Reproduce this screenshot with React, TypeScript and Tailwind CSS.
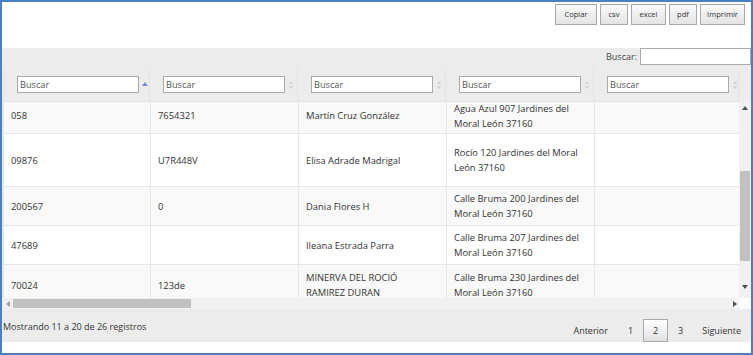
const buttons = [
  { label: 'Copiar', w: 'w-[42px]' },
  { label: 'csv', w: 'w-[28px]' },
  { label: 'excel', w: 'w-[35px]' },
  { label: 'pdf', w: 'w-[28px]' },
  { label: 'Imprimir', w: 'w-[45px]' },
]

const colWidths = ['w-[147px]', 'w-[148px]', 'w-[148px]', 'w-[148px]', 'w-[145px]']

type Row = { h: string; striped: boolean; pad: string; cells: string[][] }

const rows: Row[] = [
  { h: 'h-[32px]', striped: true, pad: 'pb-[4px]', cells: [['058'], ['7654321'], ['Martín Cruz González'], ['Agua Azul 907 Jardines del', 'Moral León 37160'], []] },
  { h: 'h-[53px]', striped: false, pad: '', cells: [['09876'], ['U7R448V'], ['Elisa Adrade Madrigal'], ['Rocío 120 Jardines del Moral', 'León 37160'], []] },
  { h: 'h-[39px]', striped: true, pad: '', cells: [['200567'], ['0'], ['Dania Flores H'], ['Calle Bruma 200 Jardines del', 'Moral León 37160'], []] },
  { h: 'h-[39px]', striped: false, pad: '', cells: [['47689'], [], ['Ileana Estrada Parra'], ['Calle Bruma 207 Jardines del', 'Moral León 37160'], []] },
  { h: 'h-[41px]', striped: true, pad: '', cells: [['70024'], ['123de'], ['MINERVA DEL ROCIÓ', 'RAMIREZ DURAN'], ['Calle Bruma 230 Jardines del', 'Moral León 37160'], []] },
]

function SortIcon({ active }: { active: boolean }) {
  if (active) {
    return (
      <svg width="6" height="8" viewBox="0 0 6 8" className="ml-[3px]">
        <path d="M0 5 L3 1 L6 5 Z" fill="#7b86d6" />
      </svg>
    )
  }
  return (
    <svg width="6" height="10" viewBox="0 0 6 10" className="ml-[3px]">
      <path d="M0.5 4 L3 1 L5.5 4 Z" fill="#d6d6d6" />
      <path d="M0.5 6 L3 9 L5.5 6 Z" fill="#d6d6d6" />
    </svg>
  )
}

export default function App() {
  return (
    <div className="w-[753px] h-[355px] border-2 border-[#4a7fc1] bg-white flex flex-col overflow-hidden font-['Open_Sans',sans-serif] text-[#333]">
      {/* toolbar */}
      <div className="h-[46px] flex justify-end items-start pt-[2px] pr-[6px] gap-[3px]">
        {buttons.map(b => (
          <div
            key={b.label}
            className={`${b.w} h-[21px] border border-[#a8a8a8] bg-linear-to-b from-[#fafafa] to-[#e4e4e4] flex items-center justify-center text-[7.6px] text-[#333]`}
          >
            {b.label}
          </div>
        ))}
      </div>

      <div className="h-[294px] bg-[#ececec] flex flex-col">
        {/* global search */}
        <div className="h-[20px] flex justify-end items-start">
          <span className="text-[9px] mr-[3px] mt-[2px] text-[#444]">Buscar:</span>
          <div className="w-[111px] h-[17px] bg-white border border-[#aaa]" />
        </div>

        {/* header */}
        <div className="h-[33px] flex pl-[1px]">
          {colWidths.map((w, i) => (
            <div key={i} className={`${w} h-full flex items-center pl-[13px] border-r border-[#e0e3e8] ${i === 0 ? 'border-l' : ''}`}>
              <input
                placeholder="Buscar"
                className="w-[122px] h-[17px] bg-white border border-[#aaa] px-[2px] text-[9.2px] placeholder:text-[#555] outline-none"
              />
              <SortIcon active={i === 0} />
            </div>
          ))}
        </div>

        {/* body + vertical scrollbar */}
        <div className="h-[197px] flex pl-[1px]">
          <div className="w-[736px] h-full overflow-hidden bg-white border-l border-[#e0e3e8] border-t">
            {rows.map((r, ri) => (
              <div key={ri} className={`${r.h} flex shrink-0 border-b border-[#e4e7eb] ${r.striped ? 'bg-[#f9f9f9]' : 'bg-white'}`}>
                {r.cells.map((lines, ci) => (
                  <div key={ci} className={`${colWidths[ci]} ${r.pad} shrink-0 flex flex-col justify-center pl-[7px] border-r border-[#e4e7eb] text-[9.4px] leading-[15px] whitespace-nowrap`}>
                    {lines.map((l, li) => (
                      <span key={li}>{l}</span>
                    ))}
                  </div>
                ))}
              </div>
            ))}
          </div>
          <div className="w-[12px] h-full bg-[#f1f1f1] flex flex-col items-center">
            <svg width="6" height="4" viewBox="0 0 6 4" className="mt-[5px]">
              <path d="M0 4 L3 0 L6 4 Z" fill="#505050" />
            </svg>
            <div className="w-[10px] h-[90px] bg-[#c1c1c1] mt-[61px]" />
            <svg width="6" height="4" viewBox="0 0 6 4" className="mt-[24px]">
              <path d="M0 0 L3 4 L6 0 Z" fill="#505050" />
            </svg>
          </div>
        </div>

        {/* horizontal scrollbar */}
        <div className="h-[11px] flex pl-[1px]">
          <div className="w-[736px] h-full bg-[#f1f1f1] flex items-center">
            <svg width="4" height="6" viewBox="0 0 4 6" className="ml-[3px]">
              <path d="M4 0 L0 3 L4 6 Z" fill="#a0a0a0" />
            </svg>
            <div className="w-[178px] h-[9px] bg-[#c1c1c1] ml-[3px]" />
            <div className="flex-1" />
            <svg width="4" height="6" viewBox="0 0 4 6" className="mr-[2px]">
              <path d="M0 0 L4 3 L0 6 Z" fill="#505050" />
            </svg>
          </div>
          <div className="w-[12px] h-full bg-white" />
        </div>

        {/* footer */}
        <div className="h-[33px] flex items-center justify-between pl-[1px] pr-[1px]">
          <span className="text-[9px] mt-[2px]">Mostrando 11 a 20 de 26 registros</span>
          <div className="flex items-end h-full text-[9px]">
            <span className="px-[10px] h-[23px] flex items-center">Anterior</span>
            <span className="px-[10px] h-[23px] flex items-center">1</span>
            <span className="w-[25px] h-[23px] flex items-center justify-center border border-[#a8a8a8] bg-linear-to-b from-white to-[#e2e2e2]">2</span>
            <span className="px-[10px] h-[23px] flex items-center">3</span>
            <span className="px-[9px] h-[23px] flex items-center">Siguiente</span>
          </div>
        </div>
      </div>

      <div className="h-[11px] bg-white" />
    </div>
  )
}
